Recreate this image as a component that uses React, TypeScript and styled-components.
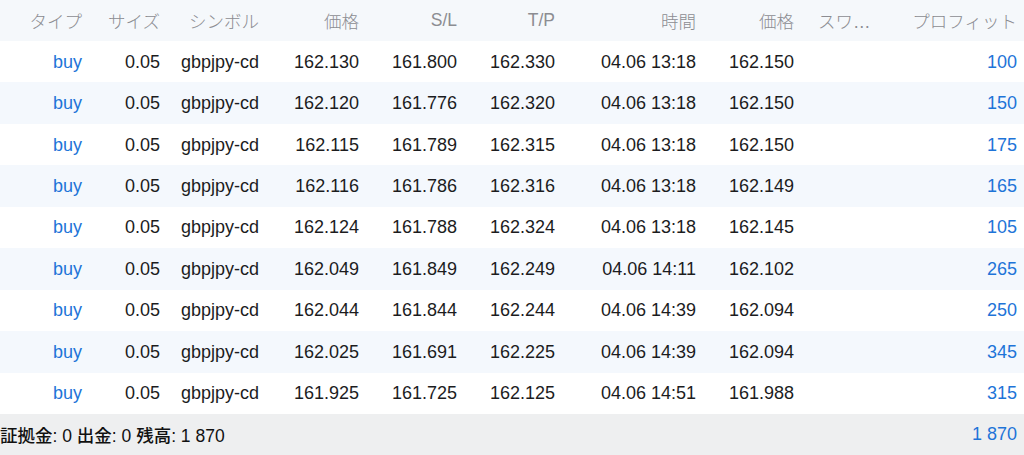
import React from "react";
import styled, { createGlobalStyle } from "styled-components";

const Global = createGlobalStyle`
  html, body { margin: 0; padding: 0; background: #ffffff; }
  body { font-family: "Liberation Sans", "Noto Sans CJK JP", Arial, sans-serif; -webkit-font-smoothing: antialiased; }
`;

const cols = "82px 78px 99px 100px 98px 98px 141px 98px 86px 137px";

const Page = styled.div`
  width: 1024px;
  height: 455px;
  overflow: hidden;
  display: flex;
  flex-direction: column;
`;

const HeaderRow = styled.div`
  display: grid;
  grid-template-columns: ${cols};
  height: 41px;
  align-items: center;
  background: #f5f8fb;
  color: #8c8d92;
  font-size: 17.5px;
  font-weight: 300;
`;

const Row = styled.div<{ $alt: boolean }>`
  display: grid;
  grid-template-columns: ${cols};
  height: 41.45px;
  align-items: center;
  background: ${(p) => (p.$alt ? "#f4f8fd" : "#ffffff")};
  color: #1c1c1e;
  font-size: 18px;
  padding-top: 1px;
  box-sizing: border-box;
`;

const Cell = styled.div<{ $blue?: boolean; $left?: boolean }>`
  text-align: ${(p) => (p.$left ? "left" : "right")};
  padding-left: ${(p) => (p.$left ? "24px" : "0")};
  color: ${(p) => (p.$blue ? "#1e74d8" : "inherit")};
  white-space: nowrap;
`;

const Footer = styled.div`
  display: flex;
  justify-content: space-between;
  align-items: center;
  height: 41px;
  background: #eeeff0;
  padding-right: 7px;
  font-size: 17.5px;
  color: #111;
`;

const Summary = styled.span`
  font-weight: 500;
`;

const Total = styled.span`
  color: #1e74d8;
  font-size: 18px;
`;

type Trade = [string, string, string, string, string, string, string, string, string, string];

const rows: Trade[] = [
  ["buy", "0.05", "gbpjpy-cd", "162.130", "161.800", "162.330", "04.06 13:18", "162.150", "", "100"],
  ["buy", "0.05", "gbpjpy-cd", "162.120", "161.776", "162.320", "04.06 13:18", "162.150", "", "150"],
  ["buy", "0.05", "gbpjpy-cd", "162.115", "161.789", "162.315", "04.06 13:18", "162.150", "", "175"],
  ["buy", "0.05", "gbpjpy-cd", "162.116", "161.786", "162.316", "04.06 13:18", "162.149", "", "165"],
  ["buy", "0.05", "gbpjpy-cd", "162.124", "161.788", "162.324", "04.06 13:18", "162.145", "", "105"],
  ["buy", "0.05", "gbpjpy-cd", "162.049", "161.849", "162.249", "04.06 14:11", "162.102", "", "265"],
  ["buy", "0.05", "gbpjpy-cd", "162.044", "161.844", "162.244", "04.06 14:39", "162.094", "", "250"],
  ["buy", "0.05", "gbpjpy-cd", "162.025", "161.691", "162.225", "04.06 14:39", "162.094", "", "345"],
  ["buy", "0.05", "gbpjpy-cd", "161.925", "161.725", "162.125", "04.06 14:51", "161.988", "", "315"],
];

const headers = ["タイプ", "サイズ", "シンボル", "価格", "S/L", "T/P", "時間", "価格", "スワ…", "プロフィット"];

export default function App() {
  return (
    <Page>
      <Global />
      <HeaderRow>
        {headers.map((h, i) => (
          <Cell key={i} $left={i === 8}>
            {h}
          </Cell>
        ))}
      </HeaderRow>
      {rows.map((r, ri) => (
        <Row key={ri} $alt={ri % 2 === 1}>
          {r.map((v, ci) => (
            <Cell key={ci} $blue={ci === 0 || ci === 9} $left={ci === 8}>
              {v}
            </Cell>
          ))}
        </Row>
      ))}
      <Footer>
        <Summary>証拠金: 0 出金: 0 残高: 1 870</Summary>
        <Total>1 870</Total>
      </Footer>
    </Page>
  );
}
